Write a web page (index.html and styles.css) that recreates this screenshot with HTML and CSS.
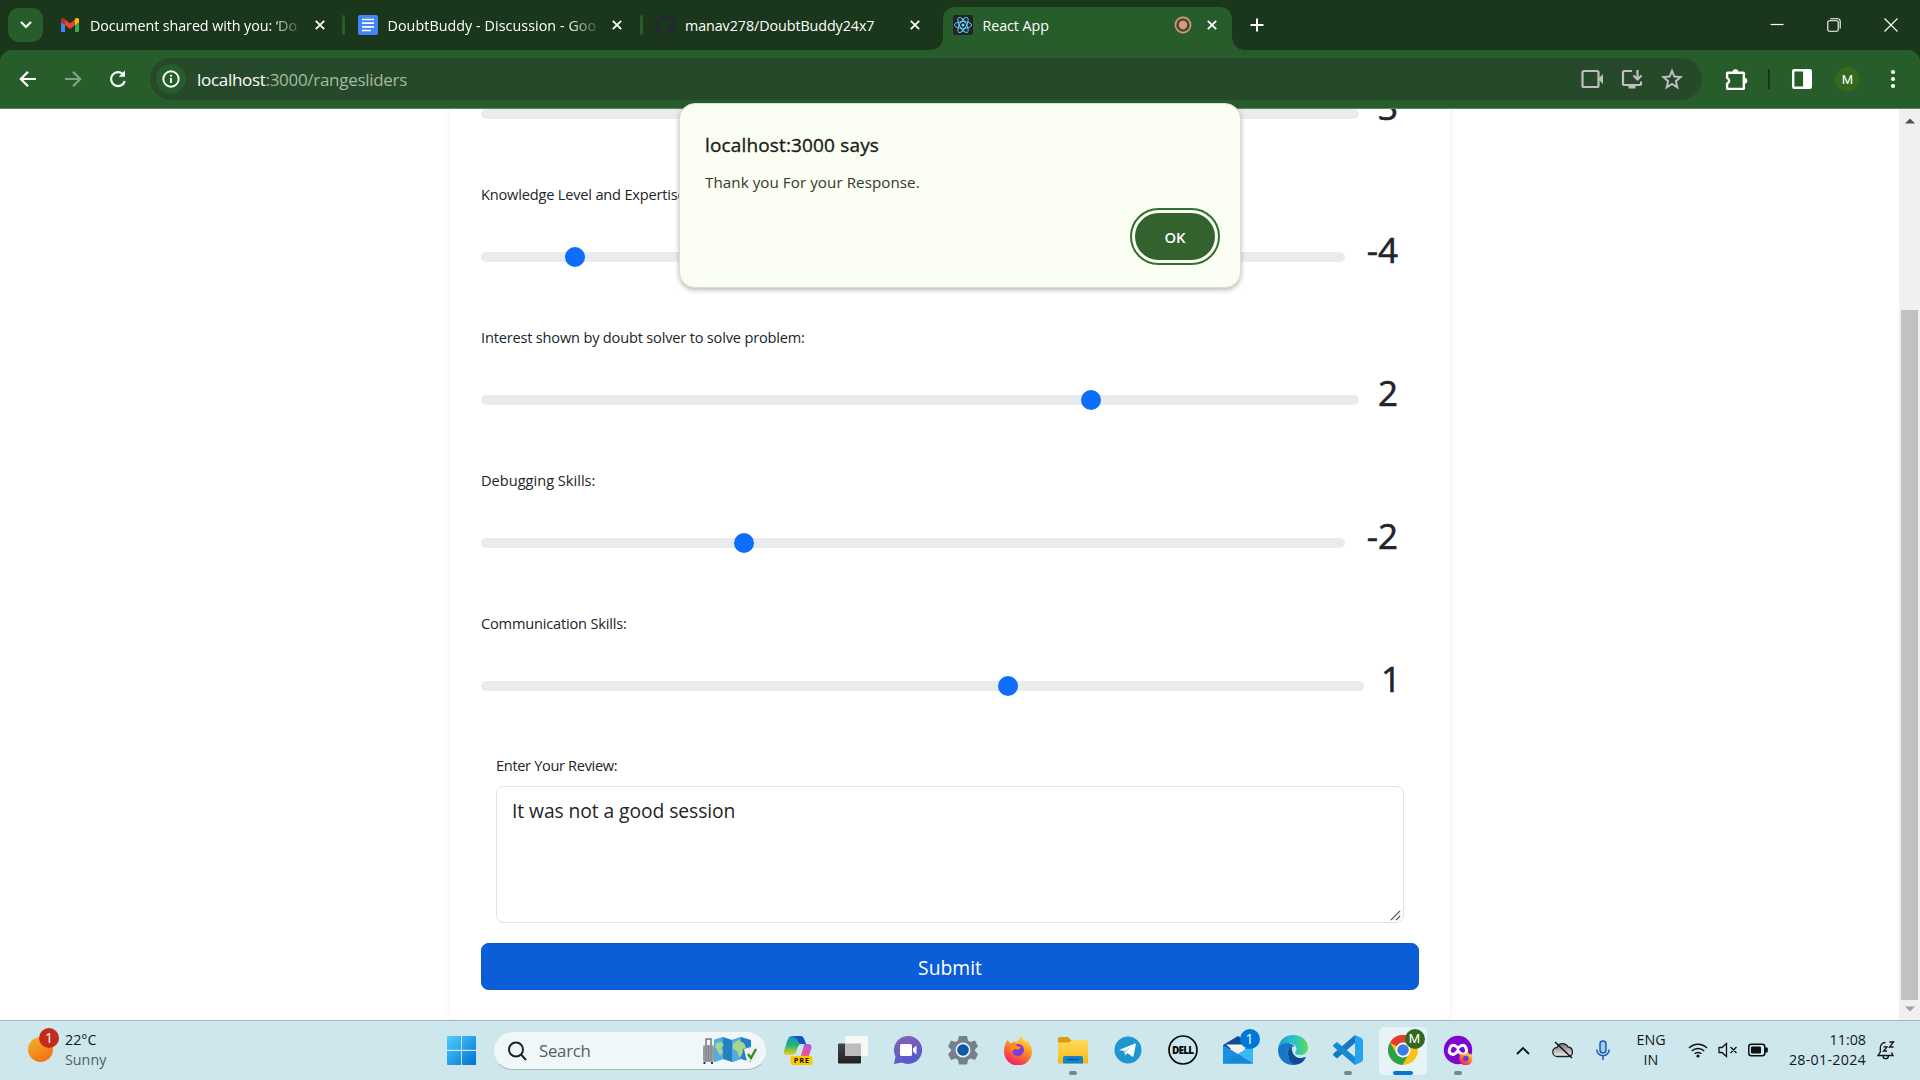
FILE: index.html
```html
<!DOCTYPE html>
<html lang="en">
<head>
<meta charset="utf-8">
<title>React App</title>
<link rel="stylesheet" href="styles.css">
</head>
<body>
<div class="screen">
  <header class="tabstrip">
    <button class="tab-search"><svg width="12" height="8" viewBox="0 0 12 8"><path d="M1 1l5 5 5-5" fill="none" stroke="#fff" stroke-width="2.2"/></svg></button>
    <div class="tabs">
      <div class="tab tab--divided">
        <svg class="favicon" viewBox="0 0 20 20"><path d="M1 5v10.500c0 1 .6 1.500 1.500 1.500H5V8z" fill="#4285f4"/><path d="M19 5v10.500c0 1-.6 1.500-1.500 1.500H15V8z" fill="#34a853"/><path d="M5 4.500l5 4 5-4V10l-5 4-5-4z" fill="#ea4335"/><path d="M1 5c0-2 2-2.500 3.400-1.500L5 4v6L1 7z" fill="#c5221f"/><path d="M19 5c0-2-2-2.500-3.400-1.500L15 4v6l4-3z" fill="#fbbc04"/></svg>
        <span class="tab-title tab-title--fade">Document shared with you: ‘Do</span>
        <svg class="x" viewBox="0 0 10 10"><path d="M.8.8l8.400 8.400M9.200.8L.8 9.200"/></svg>
      </div>
      <div class="tab tab--divided">
        <svg class="favicon" viewBox="0 0 20 20"><rect width="20" height="20" rx="2" fill="#4285f4"/><path d="M4 4.500h12M4 8.200h12M4 11.900h12M4 15.500h9" stroke="#fff" stroke-width="1.700"/></svg>
        <span class="tab-title tab-title--fade tab-title--wide">DoubtBuddy - Discussion - Goo</span>
        <svg class="x" viewBox="0 0 10 10"><path d="M.8.8l8.400 8.400M9.200.8L.8 9.200"/></svg>
      </div>
      <div class="tab">
        <svg class="favicon" viewBox="0 0 16 16"><path fill="#24292f" d="M8 0C3.580 0 0 3.580 0 8c0 3.540 2.290 6.530 5.470 7.590.4.070.55-.17.55-.38v-1.490c-2.010.37-2.530-.49-2.690-.94-.09-.23-.48-.94-.82-1.130-.28-.15-.68-.52-.01-.53.63-.01 1.080.58 1.230.82.72 1.210 1.870.87 2.330.66.070-.52.28-.87.51-1.070-1.780-.2-3.640-.89-3.640-3.950 0-.87.31-1.590.82-2.150-.08-.2-.36-1.020.08-2.120 0 0 .67-.21 2.200.82a7.500 7.500 0 0 1 4 0c1.530-1.040 2.200-.82 2.200-.82.44 1.100.16 1.920.08 2.120.51.56.82 1.270.82 2.150 0 3.070-1.870 3.750-3.650 3.950.29.25.54.73.54 1.480v2.200c0 .21.15.46.55.38A8 8 0 0 0 16 8c0-4.420-3.580-8-8-8z"/></svg>
        <span class="tab-title">manav278/DoubtBuddy24x7</span>
        <svg class="x" viewBox="0 0 10 10"><path d="M.8.8l8.400 8.400M9.200.8L.8 9.200"/></svg>
      </div>
      <div class="tab tab--active">
        <svg class="favicon" viewBox="0 0 20 20"><rect width="20" height="20" rx="2" fill="#20232a"/><g fill="none" stroke="#61dafb" stroke-width=".9"><ellipse cx="10" cy="10" rx="8.600" ry="3.400"/><ellipse cx="10" cy="10" rx="8.600" ry="3.400" transform="rotate(60 10 10)"/><ellipse cx="10" cy="10" rx="8.600" ry="3.400" transform="rotate(120 10 10)"/></g><circle cx="10" cy="10" r="1.500" fill="#61dafb"/></svg>
        <span class="tab-title">React App</span>
        <svg class="rec" viewBox="0 0 18 18"><circle cx="9" cy="9" r="7.600" fill="none" stroke="#f28b82" stroke-width="1.600"/><circle cx="9" cy="9" r="4.200" fill="#f28b82"/></svg>
        <svg class="x" viewBox="0 0 10 10"><path d="M.8.8l8.400 8.400M9.200.8L.8 9.200"/></svg>
      </div>
    </div>
    <svg class="new-tab" viewBox="0 0 14 14"><path d="M7 .5v13M.5 7h13" stroke="#fff" stroke-width="2"/></svg>
    <div class="window-controls">
      <svg viewBox="0 0 14 14"><path d="M.5 6.500h13" stroke="#fff" stroke-width="1.200"/></svg>
      <svg viewBox="0 0 14 14" fill="none" stroke="#fff" stroke-width="1.100"><rect x=".8" y="2.800" width="10.400" height="10.400" rx="1.500"/><path d="M3.200.8h7.300a2.700 2.700 0 0 1 2.700 2.700v7"/></svg>
      <svg viewBox="0 0 14 14"><path d="M.5.5l13 13M13.500.5L.5 13.500" stroke="#fff" stroke-width="1.100"/></svg>
    </div>
  </header>

  <div class="toolbar">
    <nav class="nav-buttons">
      <svg viewBox="0 0 20 20"><path d="M18 10H3M10 2.800L2.800 10l7.200 7.200"/></svg>
      <svg class="dim" viewBox="0 0 20 20"><path d="M2 10h15M10 2.800l7.200 7.200-7.200 7.200"/></svg>
      <svg viewBox="0 0 20 20"><path d="M16.800 12.200A7 7 0 1 1 15.500 5.600"/><path d="M17 1.500v6.300h-6.300z" fill="#fff" stroke="none"/></svg>
    </nav>
    <div class="omnibox">
      <span class="site-info"><svg width="18" height="18" viewBox="0 0 18 18"><circle cx="9" cy="9" r="7.700" fill="none" stroke="#fff" stroke-width="1.900"/><path d="M9 8v5M9 4.800v1.900" stroke="#fff" stroke-width="1.800"/></svg></span>
      <span class="url"><b>localhost</b>:3000/rangesliders</span>
      <span class="omni-icons">
        <svg viewBox="0 0 22 22" fill="none" stroke="#c0bdc3" stroke-width="2.200"><rect x="1.500" y="3" width="16" height="16" rx="1.500"/><path d="M17 11l5.500-5.500v11z" fill="#c0bdc3" stroke="none"/></svg>
        <svg viewBox="0 0 22 22" fill="none" stroke="#c0bdc3" stroke-width="2.200"><path d="M11 3H3.500Q2 3 2 4.500v11Q2 17 3.500 17h15q1.500 0 1.500-1.500V13.500"/><path d="M16.500 2v9M12.500 7.500l4 4 4-4"/><path d="M7.500 17h7v3.500h-7z" fill="#c0bdc3" stroke="none"/></svg>
        <svg viewBox="0 0 22 22" fill="none" stroke="#c0bdc3" stroke-width="2"><path d="M11 2.800l2.400 5.800 6.200.5-4.700 4.100 1.400 6.100-5.300-3.300-5.300 3.300 1.400-6.100-4.700-4.100 6.200-.5z"/></svg>
      </span>
    </div>
    <div class="tools">
      <svg class="puzzle" viewBox="0 0 22 22"><path d="M2.500 4.500h15q.5 0 .5.500v14.500q0 .5-.5.500h-15q-.5 0-.5-.5V15q4-2.800 0-5.600V5q0-.5.500-.500z" fill="none" stroke="#fff" stroke-width="2.300" stroke-linejoin="round"/><path d="M7.200 4a2.800 2.800 0 0 1 5.600 0zM18.500 9.400a2.800 2.800 0 0 1 0 5.600z" fill="#fff"/></svg>
      <span class="divider"></span>
      <svg class="panel" viewBox="0 0 20 20"><rect x="2" y="2" width="16" height="16" rx="1" fill="none" stroke="#fff" stroke-width="2.200"/><path d="M11 2h7v16h-7z" fill="#fff"/></svg>
      <span class="avatar">M</span>
      <svg class="dots" viewBox="0 0 6 20" fill="#fff"><circle cx="3" cy="3" r="2.100"/><circle cx="3" cy="10" r="2.100"/><circle cx="3" cy="17" r="2.100"/></svg>
    </div>
  </div>

  <main class="page">
    <div class="viewport">
      <form class="card">
        <section class="question">
          <label></label>
          <div class="slider-row"><span class="track"></span><output>3</output></div>
        </section>
        <section class="question">
          <label class="label--snug">Knowledge Level and Expertise:</label>
          <div class="slider-row"><span class="track"><i class="thumb" style="--pos:.1"></i></span><output class="signed">-4</output></div>
        </section>
        <section class="question">
          <label class="label--snug">Interest shown by doubt solver to solve problem:</label>
          <div class="slider-row"><span class="track"><i class="thumb" style="--pos:.7"></i></span><output>2</output></div>
        </section>
        <section class="question">
          <label>Debugging Skills:</label>
          <div class="slider-row"><span class="track"><i class="thumb" style="--pos:.3"></i></span><output class="signed">-2</output></div>
        </section>
        <section class="question">
          <label class="label--snug">Communication Skills:</label>
          <div class="slider-row"><span class="track"><i class="thumb" style="--pos:.6"></i></span><output class="narrow">1</output></div>
        </section>
        <section class="review">
          <label class="label--tight">Enter Your Review:</label>
          <div class="textarea">It was not a good session
            <svg class="grip" viewBox="0 0 12 12"><path d="M1 11L11 1M6.500 11L11 6.500" stroke="#555" stroke-width="1.400"/></svg>
          </div>
        </section>
        <button class="submit" type="button">Submit</button>
      </form>
    </div>
    <div class="scrollbar">
      <svg viewBox="0 0 10 6"><path d="M0 5.500L5 .5l5 5z" fill="#505050"/></svg>
      <span class="scroll-thumb"></span>
      <svg viewBox="0 0 10 6"><path d="M0 .5l5 5 5-5z" fill="#a3a3a3"/></svg>
    </div>
  </main>

  <div class="dialog">
    <h1>localhost:3000 says</h1>
    <p>Thank you For your Response.</p>
    <button class="ok">OK</button>
  </div>

  <footer class="taskbar">
    <div class="weather">
      <span class="sun"><i class="badge badge--red">1</i></span>
      <span class="weather-text"><span>22°C</span><span class="muted">Sunny</span></span>
    </div>
    <div class="dock">
      <svg class="start" viewBox="0 0 30 30"><defs><linearGradient id="win" x1="0" y1="0" x2="1" y2="1"><stop offset="0" stop-color="#4cd0ff"/><stop offset="1" stop-color="#0070d0"/></linearGradient></defs><path fill="url(#win)" d="M1 0h13.500v14.300H0V1q0-1 1-1zM15.500 0H29q1 0 1 1v13.300H15.500zM0 15.500h14.500V30H1q-1 0-1-1zM15.500 15.500H30V29q0 1-1 1H15.500z"/></svg>
      <div class="search">
        <svg width="20" height="20" viewBox="0 0 20 20" fill="none" stroke="#1d2528" stroke-width="2"><circle cx="9" cy="8.500" r="7"/><path d="M14 13.500l5 5.500"/></svg>
        <span>Search</span>
        <svg class="travel" viewBox="0 0 58 30">
          <path d="M12 4l9-3 9 3 9-3 10 3v22l-10-3-9 3-9-3-9 3z" fill="#2280c4"/><path d="M12 4l9-3v22l-9 3zM30 4l9-3v22l-9 3z" fill="#58a9e2"/><path d="M14 7l5-1 3 3-3 3 2 4-3 4-3-6-2-3zM31 8l5-4 6 3 2 5-3 1-1 6-3 2-2-6-4-2z" fill="#a5d88a"/>
          <path d="M42 13l14-4 1 14-12 3z" fill="#f5ecfb"/><path d="M46 18l3 4 5-9" fill="none" stroke="#1f9a0f" stroke-width="2.400"/>
          <rect x="4" y="3" width="5" height="8" fill="none" stroke="#6b6f74" stroke-width="1.400"/><rect x="1" y="9" width="11" height="17" rx="2" fill="#999da2"/><path d="M4 10v15M6.500 10v15M9 10v15" stroke="#7e8388"/><path d="M2.500 26v2M10 26v2" stroke="#333" stroke-width="2"/>
        </svg>
      </div>
      <div class="apps">
        <span class="app"><svg viewBox="0 0 30 30"><defs><linearGradient id="cpa" x1="0" y1="0" x2="0" y2="1"><stop offset="0" stop-color="#168fd8"/><stop offset=".5" stop-color="#2cb46b"/><stop offset="1" stop-color="#f0cf20"/></linearGradient><linearGradient id="cpb" x1="0" y1="0" x2="0" y2="1"><stop offset="0" stop-color="#a260ec"/><stop offset=".6" stop-color="#f0508e"/><stop offset="1" stop-color="#f5a04e"/></linearGradient></defs><path d="M9 1h8q3 0 4 3l2 5h-5q-2 0-3 3l-2.500 6q-1 2-4 2H4q-4 0-3-4L4.500 5Q6 1 9 1z" fill="url(#cpa)"/><path d="M9 1h8q3 0 4 3l2 5h-5q-2 0-3-3t-6-5z" fill="#1552c8"/><path d="M21 9h4q4 0 3.500 4l-3 9q-1 4-5 4h-7q3 0 4-4l3-10q.5-3 .500-3z" fill="url(#cpb)"/><rect x="7.500" y="21" width="22" height="9" rx="2" fill="#fdc800"/><text x="18.700" y="28.400" class="pre">PRE</text></svg></span>
        <span class="app"><svg viewBox="0 0 30 30"><defs><linearGradient id="tv" x1="0" y1="0" x2="0" y2="1"><stop offset="0" stop-color="#444"/><stop offset="1" stop-color="#222"/></linearGradient></defs><rect x="0" y="8.500" width="23" height="20" rx="1" fill="url(#tv)"/><rect x="7" y="1" width="23" height="20" rx="1" fill="#f7f7f7"/><path d="M7 8.500h16V21H7z" fill="#bdbdbd"/></svg></span>
        <span class="app"><svg viewBox="0 0 30 30"><defs><linearGradient id="tm" x1="0" y1="0" x2=".4" y2="1"><stop offset="0" stop-color="#8a63b0"/><stop offset="1" stop-color="#5459cc"/></linearGradient></defs><path d="M15 1a14 14 0 1 1-6 26.600L1 29l1.500-7.500A14 14 0 0 1 15 1z" fill="url(#tm)"/><rect x="7" y="9" width="12" height="12" rx="1.500" fill="#fff"/><path d="M20 13.500l3.500-3v9l-3.500-3z" fill="#fff"/></svg></span>
        <span class="app"><svg viewBox="0 0 30 30"><path d="M11 1h8l1 4.500 2.500 1.500 4.500-1.500 3 6-3 3v1.500l3 3-3 6-4.500-1.500-2.500 1.500-1 4.500h-8l-1-4.500L7.500 23.500 3 25l-3-6 3-3v-1.500l-3-3 3-6L7.500 7 10 5.500z" fill="#75808a"/><circle cx="15" cy="15" r="7.500" fill="#e8f0f4"/><circle cx="15" cy="15" r="5.800" fill="#0c59a4"/></svg></span>
        <span class="app"><svg viewBox="0 0 30 30"><defs><linearGradient id="ff" x1=".8" y1="0" x2=".3" y2="1"><stop offset="0" stop-color="#fff04a"/><stop offset=".45" stop-color="#ff8f20"/><stop offset="1" stop-color="#f0186a"/></linearGradient></defs><path id="fox" d="M4.500 5l3 3.500q3-2.500 6-2l-1 2.500q4-5 6-8.500 2 5 5 6.500l.5-1.500q5 4.500 5 11a14 14 0 0 1-28 0Q1 10 4.500 5z" fill="url(#ff)"/><circle cx="15" cy="15" r="6" fill="#7b3be0"/><path d="M8 9q4-1 6 2l4 1q-2 4-5 2-3 0-3 3-4-4-2-8z" fill="#ff8a16"/></svg></span>
        <span class="app app--running"><svg viewBox="0 0 30 30"><defs><linearGradient id="fd" x1="0" y1="0" x2="0" y2="1"><stop offset="0" stop-color="#ffdc5c"/><stop offset="1" stop-color="#f7b718"/></linearGradient></defs><path d="M0 4q0-2 2-2h8l3 3h15q2 0 2 2v4H0z" fill="#dc9a0c"/><path d="M0 7.500h11l3-2.500h14q2 0 2 2v21.500H0z" fill="url(#fd)"/><path d="M5 28.500V23q0-2 2-2h16q2 0 2 2v5.500z" fill="#1183cf"/><path d="M9 24.500h12" stroke="#0b4f90" stroke-width="1.500"/></svg></span>
        <span class="app"><svg viewBox="0 0 30 30"><circle cx="15" cy="15" r="13.500" fill="#1e96cf"/><path d="M6 15L22 8.500q1-.3.800 1L20.500 21q-.3 1.300-1.500.6L14.500 18 12 20.500l-.6-4.500z" fill="#fff"/><path d="M11.500 16l7.500-5-6 6-.8 3z" fill="#b8d8ea"/></svg></span>
        <span class="app"><svg viewBox="0 0 30 30"><circle cx="15" cy="15" r="14" fill="none" stroke="#0a0a0a" stroke-width="1.700"/><text x="14.700" y="18.700" class="dell">DELL</text></svg></span>
        <span class="app"><svg viewBox="0 0 30 30"><path d="M0 10L15 1l15 9v4H0z" fill="#124a94"/><path d="M3 9.500h24L15 20z" fill="#f2f2f2"/><path d="M0 10l15 9 15-9v18.500H0z" fill="#1a8fe0"/><path d="M0 28.500L30 10v18.500z" fill="#38b8f4"/><path d="M0 28.500h30L15 19z" fill="#1887d8"/></svg><i class="badge badge--blue">1</i></span>
        <span class="app"><svg viewBox="0 0 30 30"><defs><linearGradient id="ed" x1="0" y1=".3" x2="1" y2=".3"><stop offset="0" stop-color="#1c9fd8"/><stop offset=".6" stop-color="#2fc5c0"/><stop offset="1" stop-color="#5fdc50"/></linearGradient></defs><path d="M0 14C1 5 7 0 15 0c9 0 15 6 15 12.500 0 5-4 7.500-8 7.500-3.500 0-5-1.200-5-2.200 0-.8 1.500-1.500 1.500-4C18.500 10 14 8 10 8 5 8 1 11 0 14z" fill="url(#ed)"/><path d="M0 15c0-4 4-7 9-7 4 0 7 2 7.500 3.500C12 11 9 15 10 20c1 6 6 9 9 9.500-2 .5-3 .5-4 .5C7 30 0 24 0 15z" fill="#1676c8"/><path d="M10 20c-.7-4 1-7.500 4-9-1 5 2 12 8 12 3 0 5-1.500 5.500-1 .8 1-3.500 7.500-9.500 7.500-4 0-7.300-4.500-8-9.500z" fill="#124d94"/></svg></span>
        <span class="app app--running"><svg viewBox="0 0 30 30"><path d="M22 0v8L4 23.500l-3.500-3q-.8-1 0-2z" fill="#1779bd"/><path d="M22 30v-8L4 7 .5 9.800q-.8 1 0 2z" fill="#1689d0"/><path d="M22 0l6.500 3Q30 4 30 5.500v19q0 1.500-1.500 2.500L22 30z" fill="#25a3f2"/></svg></span>
        <span class="app app--current"><svg viewBox="0 0 30 30"><circle cx="15" cy="15" r="15" fill="#fbc116"/><path d="M15 15L2 7.500A15 15 0 0 1 28 7.500H15z" fill="#e53a2e"/><path d="M2 7.500A15 15 0 0 0 14.500 30L21 18.500 15 15 8.500 18.500z" fill="#2da04c"/><circle cx="15" cy="15" r="7.500" fill="#fff"/><circle cx="15" cy="15" r="5.800" fill="#3a7de8"/></svg><i class="badge badge--profile">M</i></span>
        <span class="app app--running"><svg viewBox="0 0 30 30"><circle cx="15" cy="15" r="14.200" fill="#7c08d0"/><path d="M15 13Q9.500 7.500 7 13t3 6.500q2.500-.3 5-4 2.500 3.700 5 4 5-1 3-6.500t-8 0z" fill="none" stroke="#fff" stroke-width="3"/><g transform="translate(15.800 16) scale(.47)"><use href="#fox"/><circle cx="15" cy="16" r="6" fill="#6a3ad8"/></g></svg></span>
      </div>
    </div>
    <div class="tray">
      <svg class="tray-chevron" viewBox="0 0 14 9"><path d="M1 8l6-6 6 6" fill="none" stroke="#111" stroke-width="1.900"/></svg>
      <svg class="tray-cloud" viewBox="0 0 22 18"><defs><linearGradient id="cl" x1="0" y1="0" x2="0" y2="1"><stop offset="0" stop-color="#777"/><stop offset="1" stop-color="#eee"/></linearGradient></defs><path d="M5.500 15.500a4.500 4.500 0 0 1-.5-9 6 6 0 0 1 11-.5 4.800 4.800 0 0 1 .5 9.500z" fill="url(#cl)" stroke="#222" stroke-width="1.300"/><path d="M3 1l17 16" stroke="#111" stroke-width="1.500"/></svg>
      <svg class="tray-mic" viewBox="0 0 14 20" fill="none" stroke="#1b5cb5" stroke-width="1.500"><rect x="4" y="1" width="6" height="12" rx="3" fill="#a7cdea"/><path d="M.8 9.500a6.200 6.200 0 0 0 12.400 0M7 15.500V20"/></svg>
      <span class="lang"><span>ENG</span><span>IN</span></span>
      <svg class="tray-wifi" viewBox="0 0 20 16" fill="none" stroke="#111" stroke-width="1.500"><path d="M1 6a12.700 12.700 0 0 1 18 0M3.800 9a8.800 8.800 0 0 1 12.400 0M6.600 11.800a4.800 4.800 0 0 1 6.800 0"/><circle cx="10" cy="14" r="1.600" fill="#111" stroke="none"/></svg>
      <svg class="tray-volume" viewBox="0 0 20 16" fill="none" stroke="#111" stroke-width="1.300"><path d="M1 5.500h3L8.500 1.500v13L4 10.500H1zM12.500 5l6 6M18.500 5l-6 6"/></svg>
      <svg class="tray-battery" viewBox="0 0 20 14"><rect x=".8" y="1.300" width="16" height="11.400" rx="2.500" fill="none" stroke="#111" stroke-width="1.500"/><rect x="3" y="3.500" width="10" height="7" rx="1" fill="#111"/><path d="M17 4.500h2q.8 0 .8 1v3q0 1-.8 1h-2z" fill="#111"/></svg>
      <span class="clock"><span>11:08</span><span class="date">28-01-2024</span></span>
      <svg class="tray-bell" viewBox="0 0 18 20" fill="none" stroke="#111" stroke-width="1.300"><path d="M8.500 2.500C5 2.500 3.300 5 3.300 8v4L1 15.500h15L14.500 12.500M6 16a2.700 2.700 0 0 0 5.400 0"/><path d="M6.500 6.800h3.500L6.500 11H10M12.500 2H16.500L12.500 7H16.500"/></svg>
    </div>
  </footer>
</div>
</body>
</html>
```
FILE: styles.css
```css
* { box-sizing: border-box; }
body { margin: 0; font-family: "Open Sans", "Noto Sans", sans-serif; color: #212529; }
svg { display: block; flex: none; }
button { border: 0; padding: 0; font-family: inherit; }
i { font-style: normal; }

.screen { position: relative; width: 1920px; height: 1080px; overflow: hidden; display: flex; flex-direction: column; background: #1b371b; }

/* Tab strip */
.tabstrip { height: 50px; display: flex; align-items: center; padding-left: 8px; flex: none; }
.tab-search { width: 35px; height: 34px; border-radius: 11px; background: #275d2b; display: grid; place-items: center; }
.tabs { display: flex; align-self: stretch; margin-left: 3px; width: 1190px; }
.tab { position: relative; width: 297.5px; padding: 0 19px 0 14px; display: flex; align-items: center; color: #fff; font-size: 14.3px; }
.tab--divided::after { content: ""; position: absolute; right: -1.5px; top: 15px; width: 3px; height: 20px; border-radius: 2px; background: #275d2b; }
.tab--active { width: 289.5px; margin: 7px 4px 0; padding: 0 15px 7px 10px; background: #275d2b; border-radius: 12px 12px 0 0; }
.tab--active::before, .tab--active::after { content: ""; position: absolute; bottom: 0; width: 12px; height: 12px; }
.tab--active::before { left: -12px; background: radial-gradient(circle at 0 0, transparent 11.5px, #275d2b 12px); }
.tab--active::after { right: -12px; background: radial-gradient(circle at 100% 0, transparent 11.5px, #275d2b 12px); }
.favicon { width: 20px; height: 20px; }
.tab-title { margin-left: 10px; padding-top: 1px; flex: none; width: 212px; white-space: nowrap; line-height: 24px; letter-spacing: -.07px; }
.tab-title--wide { letter-spacing: .06px; }
.tab-title--fade { -webkit-mask-image: linear-gradient(90deg, #000 180px, transparent 214px); mask-image: linear-gradient(90deg, #000 180px, transparent 214px); }
.tab--active .tab-title { width: 180px; }
.x { width: 10px; height: 10px; margin-left: auto; stroke: #fff; stroke-width: 1.8; }
.rec { width: 18px; height: 18px; margin-left: 11px; }
.new-tab { width: 14px; height: 14px; margin-left: 14px; }
.window-controls { margin-left: auto; display: flex; gap: 43px; padding-right: 22px; }
.window-controls svg { width: 14px; height: 14px; }

/* Toolbar */
.toolbar { height: 59px; flex: none; display: flex; align-items: center; background: #275d2b; border-radius: 12px 12px 0 0; border-bottom: 1px solid #5b8a5e; }
.nav-buttons { display: flex; gap: 25px; padding-left: 18px; width: 150px; }
.nav-buttons svg { width: 20px; height: 20px; fill: none; stroke: #fff; stroke-width: 2.2; }
.nav-buttons .dim { stroke: #84a184; }
.omnibox { width: 1552px; height: 42px; border-radius: 21px; background: #264929; display: flex; align-items: center; padding: 0 19px 0 6px; }
.site-info { width: 30px; height: 30px; border-radius: 50%; background: #275d2b; display: grid; place-items: center; }
.url { margin-left: 11px; font-size: 17px; letter-spacing: -.3px; color: #a6b8a6; }
.url b { font-weight: 400; color: #fff; }
.omni-icons { margin-left: auto; display: flex; gap: 18px; }
.omni-icons svg { width: 22px; height: 22px; }
.tools { display: flex; align-items: center; flex: 1; }
.puzzle { width: 23px; height: 23px; margin-left: 23px; }
.divider { width: 2px; height: 20px; background: #1b371b; margin-left: 20px; }
.panel { width: 22px; height: 22px; margin-left: 21px; }
.avatar { width: 25px; height: 25px; border-radius: 50%; background: #33691e; color: #fff; font: 13px/25px Roboto, sans-serif; text-align: center; margin-left: 22px; }
.dots { width: 6px; height: 20px; margin-left: 30px; }

/* Page */
.page { height: 911px; display: flex; background: #fff; }
.viewport { width: 1899px; height: 911px; overflow: hidden; display: flex; justify-content: center; align-items: flex-end; }
.card { width: 1000px; flex: none; margin-right: -1px; padding: 0 31px 30px; border-radius: 8px; box-shadow: 0 0 7px rgba(0, 0, 0, .08); }
.question { height: 143px; display: flex; flex-direction: column; }
.question label, .review label { display: block; height: 24px; padding-top: .5px; font-size: 14.6px; line-height: 24px; }
.label--snug { letter-spacing: -.19px; }
.review .label--tight { padding-top: 0; letter-spacing: -.34px; }
.slider-row { display: flex; align-items: center; height: 53px; margin-top: 25px; padding-right: 21px; gap: 20px; }
.track { position: relative; flex: 1; height: 10px; border-radius: 5px; background: #e9ecef; margin-top: 1px; }
.thumb { position: absolute; width: 20px; height: 20px; border-radius: 50%; top: -5px; left: calc((100% - 21px) * var(--pos)); background: #0d6efd; }
output { width: 19px; font-size: 35px; line-height: 42px; -webkit-text-stroke: .6px #212529; margin-top: -14px; white-space: nowrap; display: flex; justify-content: flex-end; }
output.signed { width: 33px; }
output.narrow { width: 14px; margin-right: -3px; margin-left: 3px; }
.review { padding: 0 15px; }
.textarea { position: relative; height: 137px; margin-top: 9px; padding: 8px 15px; border: 1px solid #dee2e6; border-radius: 7.5px; font-size: 19.3px; letter-spacing: -.08px; line-height: 32px; }
.grip { position: absolute; right: 2px; bottom: 1px; width: 11px; height: 11px; }
.submit { display: block; width: 100%; height: 47px; margin-top: 20px; padding-top: 1px; border-radius: 7.5px; background: #0b5ed7; border: 1px solid #0a58ca; color: #fff; font-size: 19.3px; line-height: 45px; }
.scrollbar { width: 21px; background: #f0f0f0; display: flex; flex-direction: column; align-items: center; padding-top: 9px; }
.scrollbar svg { width: 10px; height: 6px; }
.scroll-thumb { width: 17px; height: 690px; margin: 186px 0 6px; background: #c1c1c1; }

/* Alert dialog */
.dialog { position: absolute; left: 679px; top: 103px; width: 562px; height: 185px; padding: 27px 25px 0; border-radius: 16px; background: #fafef3; border: 1px solid #dbe0d5; box-shadow: 0 2px 5px rgba(0, 0, 0, .28); display: flex; flex-direction: column; }
.dialog h1 { margin: 0; font-size: 19px; letter-spacing: .15px; line-height: 28px; font-weight: 400; -webkit-text-stroke: .35px #191d17; color: #191d17; white-space: nowrap; }
.dialog p { margin: 11px 0 0; font-size: 15.2px; letter-spacing: .05px; line-height: 24px; color: #33392f; white-space: nowrap; }
.ok { width: 80px; height: 47px; border-radius: 24px; margin: 19px 0 0; align-self: flex-end; background: #33622f; color: #fff; font-size: 14.8px; font-weight: 600; outline: 2px solid #33702f; outline-offset: 3px; }

/* Taskbar */
.taskbar { height: 60px; flex: none; position: relative; display: flex; align-items: center; background: #cde7ed; border-top: 1px solid #a7b5b9; font-size: 14.3px; line-height: 20px; color: #14191b; }
.weather { display: flex; align-items: center; padding: 0 0 2px 28px; width: 447px; gap: 12px; }
.sun { position: relative; width: 25px; height: 25px; border-radius: 50%; background: linear-gradient(150deg, #f2b62c, #f4660e); }
.weather-text, .lang, .clock { display: flex; flex-direction: column; }
.muted { color: #4f5e63; }
.badge { position: absolute; width: 20px; height: 20px; border-radius: 50%; color: #fff; font-size: 14px; line-height: 20px; text-align: center; }
.badge--red { background: #c42b1c; left: 11px; top: -9px; }
.badge--blue { background: #0078d7; left: 29px; top: 2px; }
.badge--profile { background: #33691e; left: 29px; top: 2px; font: 13px/20px Roboto, sans-serif; }
.dock { display: flex; align-items: center; }
.start { width: 29px; height: 29px; }
.search { width: 274px; height: 39px; margin-left: 17px; border-radius: 20px; background: #f0f7f9; border: 1px solid #d5e1e5; border-bottom-color: #a9b8bc; display: flex; align-items: center; padding: 0 6px 0 13px; font-size: 16.8px; letter-spacing: -.25px; color: #555f63; gap: 12px; }
.travel { width: 58px; height: 30px; margin-left: auto; }
.apps { display: flex; margin-left: 3.5px; }
.app { position: relative; width: 55px; height: 48px; padding-bottom: 1px; display: flex; justify-content: center; align-items: center; }
.app svg { width: 30px; height: 30px; }
.app--running::after, .app--current::after { content: ""; position: absolute; bottom: 0; left: 23.5px; width: 8px; height: 4px; border-radius: 2px; background: #7c878a; }
.app--current::before { content: ""; position: absolute; inset: 0 3.5px; border-radius: 5px; background: #e6f3f7; }
.app--current svg { position: relative; }
.app--current::after { left: 17.5px; width: 20px; background: #0078d4; }
.pre { font: 700 7.5px "Open Sans", sans-serif; text-anchor: middle; letter-spacing: .6px; fill: #1a1400; }
.dell { font: 800 10px "Open Sans", sans-serif; text-anchor: middle; letter-spacing: -.8px; fill: #0a0a0a; }
.tray { margin-left: auto; display: flex; align-items: center; padding: 0 25px 1px 0; }
.tray-chevron { width: 14px; height: 9px; margin-right: 22px; }
.tray-cloud { width: 22px; height: 18px; margin-right: 22px; }
.tray-mic { width: 14px; height: 20px; margin-right: 26px; }
.lang { width: 30px; align-items: center; margin-right: 22px; }
.tray-wifi { width: 20px; height: 16px; margin-right: 10px; }
.tray-volume { width: 20px; height: 16px; margin-right: 10px; }
.tray-battery { width: 20px; height: 14px; margin-right: 20px; }
.clock { align-items: flex-end; width: 78px; margin-right: 11px; padding-bottom: 1px; }
.date { letter-spacing: .25px; }
.tray-bell { width: 18px; height: 20px; }
```
